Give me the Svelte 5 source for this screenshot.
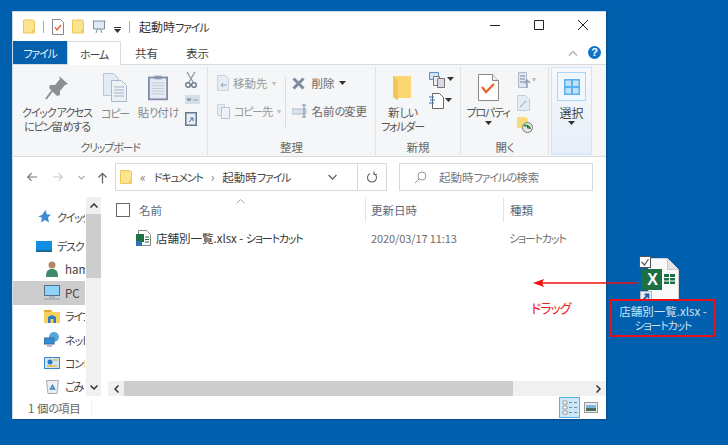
<script>
  const sidebar = [
    { label: "クイック", icon: "star", top: true },
    { label: "デスク", icon: "desk", outer: true },
    { label: "ham", icon: "user", latin: true },
    { label: "PC", icon: "pc", active: true, latin: true },
    { label: "ライフ", icon: "lib" },
    { label: "ネット", icon: "net" },
    { label: "コント", icon: "ctl" },
    { label: "ごみ", icon: "bin" }
  ];
</script>

{#snippet folder(w, h)}
  <svg width={w} height={h} viewBox="0 0 12 14"><path d="M.5.5h9l2 1v12H.5z" fill="#fde58f" stroke="#eec45d"/><path d="M9 10h2.500v3.500H9z" fill="#f3cf6c"/></svg>
{/snippet}

{#snippet caret()}
  <svg class="caret" width="7" height="4" viewBox="0 0 7 4"><path d="M0 0h7L3.500 4z" fill="#333"/></svg>
{/snippet}

<div class="desktop">
  <div class="window">
    <div class="titlebar">
      {@render folder(12, 15)}
      <i class="vline"></i>
      <svg width="12" height="16" viewBox="0 0 12 16"><path d="M.5.5h8l3 3v12H.5z" fill="#fff" stroke="#888"/><path d="M3 8l2 3 4-5" fill="none" stroke="#e8562a" stroke-width="1.300"/></svg>
      {@render folder(12, 15)}
      <svg width="14" height="14" viewBox="0 0 14 14"><path d="M.5 1h13M1.500 1v8h11V1" fill="#dfeaf5" stroke="#7e8ea0"/><path d="M4 13l1.500-4M10 13L8.500 9" stroke="#7e8ea0"/></svg>
      <span class="qat-more"><b></b>{@render caret()}</span>
      <i class="vline"></i>
      <span class="title">起動時<span class="k">ファイル</span></span>
      <span class="winbtns">
        <svg width="12" height="12" viewBox="0 0 12 12"><path d="M1 6.500h10" stroke="#222"/></svg>
        <svg width="12" height="12" viewBox="0 0 12 12"><path d="M1.500 1.500h9v9h-9z" fill="none" stroke="#222"/></svg>
        <svg width="12" height="12" viewBox="0 0 12 12"><path d="M1 1l10 10M11 1L1 11" stroke="#222"/></svg>
      </span>
    </div>

    <div class="tabs">
      <span class="tab file k">ファイル</span>
      <span class="tab home k">ホーム</span>
      <span class="tab">共有</span>
      <span class="tab">表示</span>
      <span class="tab-right">
        <svg width="10" height="6" viewBox="0 0 10 6"><path d="M1 5.500l4-4 4 4" fill="none" stroke="#aaa" stroke-width="1.200"/></svg>
        <span class="help">?</span>
      </span>
    </div>

    <div class="ribbon">
      <section class="group clip">
        <div class="body">
          <div class="big pin">
            <svg width="24" height="26" viewBox="0 0 24 26"><path d="M14 1l9 8-3 1-5 6 0 4-3 1-8-8 1-3 5 0 5-6z" fill="#8b8f92"/><path d="M7 16l-6 8" stroke="#8b8f92" stroke-width="2"/></svg>
            <span><span class="k">クイック アクセス</span><br/><span class="k">にピン</span>留<span class="k">めする</span></span>
          </div>
          <div class="big copy">
            <svg width="25" height="29" viewBox="0 0 25 29"><path d="M.5.500h10l5 5v17H.5z" fill="#e3ebf4" stroke="#b9c6d6"/><path d="M8.500 7.500h10l5 5v16h-15z" fill="#eef2f7" stroke="#aab9cb"/><path d="M11 14h10M11 17h10M11 20h10M11 23h10" stroke="#a5b3c3"/></svg>
            <span class="k">コピー</span>
          </div>
          <div class="big paste">
            <svg width="20" height="27" viewBox="0 0 22 28"><rect x="1" y="3" width="20" height="24" fill="#e7eaf3" stroke="#7f8daa" stroke-width="2"/><path d="M7 1h8v4H7z" fill="#8b97ad"/><path d="M4 9h14M4 12h14M4 15h14M4 18h14M4 21h14" stroke="#bcc6d6"/></svg>
            <span>貼<span class="k">り</span>付<span class="k">け</span></span>
          </div>
          <div class="smalls">
            <svg width="12" height="16" viewBox="0 0 12 16"><path d="M2 0l6 10M10 0L4 10" stroke="#8e99a6" stroke-width="1.300"/><circle cx="3" cy="13" r="2.300" fill="none" stroke="#5f6f84" stroke-width="1.300"/><circle cx="9" cy="13" r="2.300" fill="none" stroke="#5f6f84" stroke-width="1.300"/></svg>
            <svg width="15" height="9" viewBox="0 0 15 9"><rect width="15" height="9" fill="#d5dfea"/><path d="M2 3l1 3 1-3 1 3 1-3M8 5h5" fill="none" stroke="#7b8a9c" stroke-width=".8"/></svg>
            <svg width="12" height="15" viewBox="0 0 12 15"><rect x=".75" y="1.750" width="10.500" height="12.500" fill="#e6ecf3" stroke="#66788f" stroke-width="1.500"/><path d="M4 11l4-4M5 7h3v3" fill="none" stroke="#3e6ea8"/></svg>
          </div>
        </div>
        <label class="k">クリップボード</label>
      </section>

      <section class="group org">
        <div class="body">
          <div class="col">
            <div class="row dim">
              <svg width="12" height="16" viewBox="0 0 12 16"><path d="M.5.500h8l3 3v12H.5z" fill="#e6ecf3" stroke="#c9d3de"/><path d="M10 10H4M6 8l-2 2 2 2" fill="none" stroke="#8ea2ba"/></svg>
              <span>移動先</span><em>▾</em>
            </div>
            <div class="row dim">
              <svg width="13" height="15" viewBox="0 0 13 15"><path d="M.5.500h7v11h-7z" fill="#e6ecf3" stroke="#c9d3de"/><path d="M4.500 3.500h8v11h-8z" fill="#eef2f7" stroke="#b6c3d2"/></svg>
              <span><span class="k">コピー</span>先</span><em>▾</em>
            </div>
          </div>
          <i class="sep"></i>
          <div class="col second">
            <div class="row">
              <svg class="del" width="13" height="13" viewBox="0 0 13 13"><path d="M1.500 1.500l10 10M11.500 1.500l-10 10" stroke="#7c8b9d" stroke-width="3"/></svg>
              <span>削除</span>{@render caret()}
            </div>
            <div class="row">
              <svg width="16" height="14" viewBox="0 0 16 14"><path d="M0 5h14v5H0z" fill="#d9e2ec" stroke="#aebccb"/><path d="M12 1v12M10 1h4M10 13h4" stroke="#7c8b9d"/></svg>
              <span>名前<span class="k">の</span>変更</span>
            </div>
          </div>
        </div>
        <label>整理</label>
      </section>

      <section class="group new">
        <div class="body">
          <div class="big newf">
            <svg width="19" height="27" viewBox="0 0 19 27"><path d="M0 1h18v22H5l-1 2-4-3z" fill="#fcd670"/><path d="M0 1l5 4v20l-5-3z" fill="#f3c553"/></svg>
            <span>新<span class="k">しい</span><br/><span class="k">フォルダー</span></span>
          </div>
          <div class="smalls">
            <span class="wcaret">
              <svg width="17" height="16" viewBox="0 0 17 16"><path d="M.5.500h9v7h-9z" fill="#cfe3f5" stroke="#5f8fc0"/><path d="M4.500 4.500h6v9h-6z" fill="#eee" stroke="#777"/><path d="M8.500 6.500h7v9h-7z" fill="#d8d8e8" stroke="#777"/></svg>
              {@render caret()}
            </span>
            <span class="wcaret">
              <svg width="15" height="16" viewBox="0 0 15 16"><path d="M3.500.500h7l4 4v11h-11z" fill="#fff" stroke="#666"/><path d="M0 4h5M1 7h5M0 10h5" stroke="#2b79c9"/></svg>
              {@render caret()}
            </span>
          </div>
        </div>
        <label>新規</label>
      </section>

      <section class="group open">
        <div class="body">
          <div class="big prop">
            <svg width="21" height="27" viewBox="0 0 21 27"><path d="M.5.500h14l6 6v20H.5z" fill="#fff" stroke="#888"/><path d="M14.500.500v6h6" fill="#eee" stroke="#888"/><path d="M4 13l4 5 8-8" fill="none" stroke="#e8622c" stroke-width="2.200"/></svg>
            <span class="k">プロパティ</span>
            {@render caret()}
          </div>
          <div class="smalls">
            <span class="wcaret">
              <svg width="13" height="17" viewBox="0 0 13 17"><path d="M.5.500h8v15h-8z" fill="#dfe6ef" stroke="#aebbca"/><path d="M2 4h5M2 7h5M2 10h5" stroke="#7c8b9d"/><path d="M9 16V8M6.500 11L9 8l3 3" fill="none" stroke="#8ea2ba" stroke-width="1.500"/></svg>
              <em>▾</em>
            </span>
            <svg class="shift" width="13" height="16" viewBox="0 0 13 16"><path d="M.5.500h8l4 4v11H.5z" fill="#e6ecf3" stroke="#c1cedc"/><path d="M3 12l6-6" stroke="#b0bfd0" stroke-width="1.500"/></svg>
            <svg class="shift" width="16" height="16" viewBox="0 0 16 16"><path d="M0 0h9l2 2v9H0z" fill="#f7dc7c"/><circle cx="10.500" cy="10.500" r="5" fill="#e5e5e5" stroke="#777"/><path d="M7 9a4 4 0 0 1 6 3" fill="none" stroke="#2b9a3f" stroke-width="2"/><path d="M10.500 8v3h2" fill="none" stroke="#555"/></svg>
          </div>
        </div>
        <label>開<span class="k">く</span></label>
      </section>

      <section class="group pick">
        <div class="hl">
          <div class="hl-icon">
            <svg width="16" height="16" viewBox="0 0 16 16"><rect width="16" height="16" fill="#5cb1ef"/><path d="M1.500 1.500h5.500v5.500H1.500zM9 1.500h5.500v5.500H9zM1.500 9h5.500v5.500H1.500zM9 9h5.500v5.500H9z" fill="#bfe2fa"/></svg>
          </div>
          <span>選択</span>
          {@render caret()}
        </div>
      </section>
    </div>

    <div class="nav">
      <svg width="12" height="12" viewBox="0 0 14 12"><path d="M13 6H2M6.500 1.500L2 6l4.500 4.500" fill="none" stroke="#777" stroke-width="1.400"/></svg>
      <svg class="fwd" width="12" height="12" viewBox="0 0 14 12"><path d="M1 6h11M7.500 1.500L12 6l-4.500 4.500" fill="none" stroke="#ccc" stroke-width="1.400"/></svg>
      <svg width="7" height="5" viewBox="0 0 7 5"><path d="M.5 1l3 3 3-3" fill="none" stroke="#aaa" stroke-width="1.200"/></svg>
      <svg class="up" width="11" height="13" viewBox="0 0 12 13"><path d="M6 13V2M1.500 6.500L6 2l4.500 4.500" fill="none" stroke="#666" stroke-width="1.400"/></svg>
      <div class="address">
        {@render folder(12, 16)}
        <span class="crumb lt">«</span>
        <span class="crumb k">ドキュメント</span>
        <span class="crumb lt">›</span>
        <span class="crumb">起動時<span class="k">ファイル</span></span>
        <svg class="addr-down" width="9" height="6" viewBox="0 0 9 6"><path d="M.5 1l4 4 4-4" fill="none" stroke="#666" stroke-width="1.300"/></svg>
        <span class="refresh">
          <svg width="11" height="12" viewBox="0 0 11 12"><path d="M3 2.500a4.500 4.500 0 1 0 4 0M7 .5v3h3" fill="none" stroke="#666" stroke-width="1.100"/></svg>
        </span>
      </div>
      <div class="search">
        <svg width="13" height="13" viewBox="0 0 13 13"><circle cx="8" cy="5" r="4" fill="none" stroke="#999"/><path d="M5 8l-4 4" stroke="#999"/></svg>
        <span>起動時<span class="k">ファイルの</span>検索</span>
      </div>
    </div>

    <div class="content">
      <aside class="side">
        <ul>
          {#each sidebar as item}
            <li class:active={item.active} class:top={item.top} class:outer={item.top || item.outer}>
              <span class="ico">
                {#if item.icon === "star"}
                  <svg width="13" height="13" viewBox="0 0 13 13"><path d="M7.500 0l1.500 4.500h4L10 7.500l1 5-4-2.500-4 2.500 1-5-4-1 4-1.500z" fill="#3d8bd1"/></svg>
                {:else if item.icon === "desk"}
                  <svg width="16" height="11" viewBox="0 0 16 11"><rect width="16" height="11" fill="#0f8ee3"/><path d="M0 10h16" stroke="#245"/></svg>
                {:else if item.icon === "user"}
                  <svg width="12" height="16" viewBox="0 0 12 16"><circle cx="6" cy="4" r="3.500" fill="#b28a68"/><path d="M0 16c0-6 2-8 6-8s6 2 6 8z" fill="#3e8a68"/></svg>
                {:else if item.icon === "pc"}
                  <svg width="16" height="15" viewBox="0 0 16 15"><rect x=".5" y=".5" width="15" height="10" fill="#8fd3f8" stroke="#5a6f85"/><path d="M5 12h6M0 14h16" stroke="#8899aa"/></svg>
                {:else if item.icon === "lib"}
                  <svg width="16" height="13" viewBox="0 0 16 13"><path d="M0 0h7l2 2h7v11H0z" fill="#f7cf5d"/><path d="M0 0h7v2H0z" fill="#e1a72f"/><path d="M4 13V7l4-2 4 2v6H9.500V9h-3v4z" fill="#2b79c9"/></svg>
                {:else if item.icon === "net"}
                  <svg width="16" height="15" viewBox="0 0 16 15"><circle cx="10" cy="5" r="5" fill="#58a6dd"/><rect y="6" width="10" height="6" fill="#2f8fd8" stroke="#3c6a92"/><path d="M3 14h5" stroke="#778"/></svg>
                {:else if item.icon === "ctl"}
                  <svg width="16" height="12" viewBox="0 0 16 12"><rect x=".5" y=".5" width="15" height="11" fill="#cfe6f7" stroke="#3e86c6"/><circle cx="6" cy="5" r="2.500" fill="#2b79c9"/><path d="M9 3h5M3 9h10" stroke="#e5b63f" stroke-width="1.500"/></svg>
                {:else}
                  <svg width="13" height="15" viewBox="0 0 13 15"><path d="M.5 1.500h12l-1.500 13H2z" fill="#eceff2" stroke="#a5acb3"/><path d="M4.500 10l2-3.500 2 3.500z" fill="none" stroke="#3585c5" stroke-width="1.500"/></svg>
                {/if}
              </span>
              <span class:k={!item.latin}>{item.label}</span>
            </li>
          {/each}
        </ul>
        <div class="vscroll">
          <span class="sbtn"><svg width="8" height="5" viewBox="0 0 8 5"><path d="M.5 4.500L4 1l3.500 3.500" fill="none" stroke="#333" stroke-width="1.500"/></svg></span>
          <span class="thumb"></span>
          <span class="spacer"></span>
          <span class="sbtn"><svg width="8" height="5" viewBox="0 0 8 5"><path d="M.5.500L4 4 7.500.5" fill="none" stroke="#333" stroke-width="1.500"/></svg></span>
        </div>
      </aside>

      <div class="list">
        <span class="sort"><svg width="9" height="5" viewBox="0 0 9 5"><path d="M.5 4.500l4-4 4 4" fill="none" stroke="#aaa"/></svg></span>
        <div class="head">
          <span class="check"></span>
          <span class="h-name">名前</span>
          <span class="h-date">更新日時</span>
          <span class="h-type">種類</span>
        </div>
        <div class="file-row">
          <svg width="15" height="16" viewBox="0 0 15 16"><path d="M2.500.500h8l4 4v11h-12z" fill="#fff" stroke="#888"/><path d="M0 4h8v8H0z" fill="#1d7044"/><path d="M9 7h4M9 9.500h4M9 12h4" stroke="#1d7044"/><path d="M0 11h6v5H0z" fill="#2e6fb5"/></svg>
          <span class="fname">店舗別一覧.xlsx - <span class="k">ショートカット</span></span>
          <span class="fdate">2020/03/17 11:13</span>
          <span class="ftype k">ショートカット</span>
        </div>
        <div class="grow"></div>
        <div class="hscroll">
          <span class="hbtn"><svg width="5" height="8" viewBox="0 0 5 8"><path d="M4.500.5L1 4l3.500 3.500" fill="none" stroke="#333" stroke-width="1.500"/></svg></span>
          <span class="hthumb"></span>
          <span class="spacer"></span>
          <span class="hbtn"><svg width="5" height="8" viewBox="0 0 5 8"><path d="M.5.5L4 4 .5 7.500" fill="none" stroke="#333" stroke-width="1.500"/></svg></span>
        </div>
      </div>
    </div>

    <div class="status">
      <span class="count">1 個<span class="k">の</span>項目</span>
      <span class="views">
        <span class="view on">
          <svg width="16" height="15" viewBox="0 0 16 15"><path d="M1 1h4v3H1zM1 6h4v3H1zM1 11h4v3H1z" fill="#fff" stroke="#8a8a8a" stroke-width=".8"/><path d="M7 2.500h3M12 2.500h3M7 7.500h3M12 7.500h3M7 12.500h3M12 12.500h3" stroke="#7a8a9a" stroke-width="1.200"/></svg>
        </span>
        <span class="view thumbs">
          <svg width="14" height="11" viewBox="0 0 14 11"><rect x=".5" y=".5" width="13" height="10" fill="#e8edf2" stroke="#999"/><path d="M2 3h10v3H2z" fill="#7fb5d8"/><path d="M2 6h10v3H2z" fill="#4b6e55"/></svg>
        </span>
      </span>
    </div>
  </div>

  <svg class="arrow" width="104" height="12" viewBox="0 0 104 12"><path d="M104 6H6" stroke="#f01010" stroke-width="1.600"/><path d="M0 6l11-4-2 4 2 4z" fill="#f01010"/></svg>
  <span class="drag">ドラッグ</span>

  <div class="shortcut">
    <svg width="42" height="48" viewBox="0 0 42 48">
      <path d="M9.500 2.500h19l11 11v33h-30z" fill="#fafafa" stroke="#d4d4d4"/>
      <path d="M28.500 2.500v11h11" fill="#e4e4e4" stroke="#c8c8c8"/>
      <rect x=".5" y=".5" width="11" height="11" fill="#fff" stroke="#555"/>
      <path d="M2.500 6l3 3 4-6" fill="none" stroke="#555" stroke-width="1.200"/>
      <rect x="2" y="13" width="21" height="21" fill="#1d7044"/>
      <rect x="25" y="18" width="11" height="10" fill="#1d7044"/>
      <path d="M25 21.500h11M25 25h11M30.500 18v10" stroke="#fff" stroke-width="1"/>
      <rect x="1.500" y="35.500" width="11" height="11" fill="#eef2f7" stroke="#b5b5b5"/>
      <path d="M4 44l5-5M5.500 38.500H9.500v4" fill="none" stroke="#1f5da8" stroke-width="1.800"/>
    </svg>
    <span class="x">X</span>
    <div class="shortcut-label">店舗別一覧.xlsx -<br/><span class="k">ショートカット</span></div>
  </div>
</div>

<style>
  :global(body) {
    margin: 0;
  }

  .desktop {
    position: relative;
    width: 728px;
    height: 445px;
    overflow: hidden;
    background: #0060ae;
    font-family: "Noto Sans CJK JP", "Noto Sans", sans-serif;
    font-size: 11.5px;
    font-feature-settings: "palt";
    color: #444;
    line-height: 14px;
  }

  /* kana run narrower than kanji in the original UI font */
  .k {
    font-size: 11px;
    letter-spacing: -1.2px;
  }

  .window {
    position: absolute;
    left: 12px;
    top: 11px;
    width: 593px;
    height: 407px;
    display: flex;
    flex-direction: column;
    background: #fff;
    border: 1px solid #cfdbe6;
    border-width: 1px 0 0 1px;
    box-shadow: 1px 1px 2px #004b88;
  }

  .titlebar {
    height: 29px;
    flex: none;
    display: flex;
    align-items: center;
    padding-left: 10px;
    gap: 8px;
  }
  .vline {
    width: 1px;
    height: 12px;
    background: #aaa;
  }
  .qat-more {
    display: flex;
    flex-direction: column;
    align-items: center;
    gap: 1px;
    margin-top: 6px;
  }
  .qat-more b {
    width: 7px;
    height: 1px;
    background: #333;
  }
  .title {
    color: #333;
    font-size: 12px;
    margin-left: 1px;
  }
  .winbtns {
    margin-left: auto;
    display: flex;
    gap: 32px;
    padding-right: 17px;
    margin-top: -3px;
  }

  .tabs {
    height: 23px;
    flex: none;
    display: flex;
    align-items: stretch;
    position: relative;
  }
  .tab {
    display: flex;
    align-items: center;
    justify-content: center;
    width: 51px;
    color: #444;
  }
  .file {
    width: 54px;
    background: #0561ae;
    color: #e8f1f9;
  }
  .home {
    width: 52px;
    border: 1px solid #dadbdc;
    border-bottom: 0;
    margin-bottom: -1px;
    background: #fff;
    z-index: 1;
  }
  .tab-right {
    margin-left: auto;
    display: flex;
    align-items: center;
    gap: 10px;
    padding-right: 5px;
  }
  .help {
    width: 13px;
    height: 13px;
    border-radius: 50%;
    background: #1173c7;
    color: #fff;
    font: bold 11px/13px "Liberation Sans", sans-serif;
    text-align: center;
  }

  .ribbon {
    height: 93px;
    flex: none;
    display: flex;
    background: #f5f6f7;
    border-top: 1px solid #dadbdc;
    border-bottom: 1px solid #dadbdc;
    box-sizing: border-box;
  }
  .group {
    display: flex;
    flex-direction: column;
    border-right: 1px solid #e2e3e4;
    margin: 2px 0 1px;
    box-sizing: border-box;
    color: #666;
  }
  .group label {
    text-align: center;
    height: 15px;
    line-height: 15px;
    color: #666;
  }
  .body {
    flex: 1;
    display: flex;
    min-height: 0;
  }
  .clip { width: 195px; }
  .org { width: 168px; }
  .new { width: 85px; }
  .open { width: 88px; }
  .pick { flex: 1; border: 0; }

  .big {
    display: flex;
    flex-direction: column;
    align-items: center;
    text-align: center;
    line-height: 14px;
  }
  .big svg {
    flex: none;
  }
  .big span {
    margin-top: 8px;
    white-space: nowrap;
  }
  .pin {
    width: 84px;
    margin-left: 2px;
    padding-top: 8px;
  }
  .pin span {
    margin-top: 4px;
    color: #555;
  }
  .copy {
    width: 34px;
    padding-top: 6px;
    color: #888;
    margin-left: -1px;
  }
  .copy span, .paste span {
    margin-top: 4px;
  }
  .paste {
    width: 48px;
    margin-left: 2px;
    padding-top: 7px;
    color: #888;
  }
  .smalls {
    display: flex;
    flex-direction: column;
    gap: 7px;
    padding: 5px 0 0 3px;
    align-items: flex-start;
  }
  .col {
    display: flex;
    flex-direction: column;
    padding: 8px 0 0 9px;
    gap: 12px;
    width: 68px;
  }
  .second {
    padding-left: 6px;
    width: 84px;
  }
  .row {
    display: flex;
    align-items: center;
    gap: 4px;
    height: 16px;
    white-space: nowrap;
    color: #666;
  }
  .dim {
    color: #999;
  }
  .row em, .wcaret em {
    font-style: normal;
    font-size: 8px;
    color: #bbb;
  }
  .del {
    margin-right: 3px;
  }
  .sep {
    width: 1px;
    height: 52px;
    margin-top: 10px;
    background: #dcdddf;
  }
  .newf {
    width: 49px;
    margin-left: 2px;
    padding-top: 8px;
    color: #555;
  }
  .newf span {
    margin-top: 3px;
  }
  .new .smalls {
    padding: 5px 0 0 2px;
    gap: 5px;
  }
  .wcaret {
    display: flex;
    align-items: flex-start;
    gap: 1px;
  }
  .wcaret .caret {
    margin-top: 5px;
  }
  .prop {
    width: 50px;
    margin-left: 2px;
    padding-top: 7px;
    color: #555;
  }
  .prop span {
    margin-top: 4px;
  }
  .prop .caret {
    margin-top: 2px;
  }
  .open .smalls {
    padding: 5px 0 0 5px;
    gap: 6px;
  }
  .shift {
    margin-left: -1px;
  }
  .hl {
    width: 41px;
    margin-left: 2px;
    height: 88px;
    box-sizing: border-box;
    background: linear-gradient(#f6f9fc, #e6eef7);
    border: 1px solid #cfe5f7;
    display: flex;
    flex-direction: column;
    align-items: center;
    padding-top: 4px;
    color: #444;
  }
  .hl-icon {
    width: 29px;
    height: 29px;
    box-sizing: border-box;
    border: 1px solid #a9d7f7;
    background: #f0f8fe;
    display: flex;
    align-items: center;
    justify-content: center;
  }
  .hl span {
    margin-top: 5px;
    font-size: 12px;
  }
  .hl .caret {
    margin-top: 1px;
  }

  .nav {
    height: 40px;
    flex: none;
    display: flex;
    align-items: center;
    padding-left: 13px;
    box-sizing: border-box;
    gap: 14px;
    color: #444;
  }
  .up {
    margin-left: -2px;
  }
  .address {
    margin-left: -7px;
    width: 272px;
    height: 28px;
    box-sizing: border-box;
    border: 1px solid #d9d9d9;
    display: flex;
    align-items: center;
    padding-left: 4px;
    gap: 8px;
  }
  .crumb {
    white-space: nowrap;
  }
  .crumb.lt {
    color: #777;
    font-size: 12px;
  }
  .addr-down {
    margin-left: auto;
    margin-right: 12px;
  }
  .refresh {
    width: 28px;
    height: 100%;
    border-left: 1px solid #d9d9d9;
    display: flex;
    align-items: center;
    justify-content: center;
  }
  .search {
    width: 194px;
    height: 28px;
    box-sizing: border-box;
    border: 1px solid #d9d9d9;
    display: flex;
    align-items: center;
    padding-left: 14px;
    gap: 12px;
    color: #777;
    margin-left: -2px;
  }

  .content {
    flex: 1;
    display: flex;
    min-height: 0;
  }
  .side {
    width: 90px;
    flex: none;
    display: flex;
  }
  .side ul {
    list-style: none;
    margin: 0;
    padding: 0;
    width: 72px;
    overflow: hidden;
  }
  .side li {
    height: 23.400px;
    display: flex;
    align-items: center;
    white-space: nowrap;
    color: #444;
    padding-left: 31px;
  }
  .side li.outer {
    padding-left: 23px;
  }
  .side li.top {
    margin-top: 8px;
    margin-bottom: 6px;
  }
  .side li.active {
    background: #cdcdcd;
  }
  .ico {
    width: 16px;
    flex: none;
    display: flex;
    justify-content: center;
    margin-right: 5px;
  }
  .vscroll {
    width: 15px;
    display: flex;
    flex-direction: column;
    background: #f0f0f0;
    margin-left: 1px;
  }
  .sbtn {
    height: 17px;
    display: flex;
    align-items: center;
    justify-content: center;
    flex: none;
  }
  .thumb {
    height: 64px;
    background: #cdcdcd;
  }
  .spacer {
    flex: 1;
  }

  .list {
    flex: 1;
    display: flex;
    flex-direction: column;
    position: relative;
    margin-left: 2px;
    min-width: 0;
  }
  .sort {
    position: absolute;
    left: 131px;
    top: 0;
    line-height: 5px;
  }
  .head {
    height: 26px;
    display: flex;
    align-items: center;
    color: #5a6a7a;
  }
  .check {
    width: 12px;
    height: 12px;
    border: 1px solid #666;
    margin-left: 11px;
    flex: none;
  }
  .h-name {
    margin-left: 9px;
    width: 226px;
    flex: none;
  }
  .h-date {
    border-left: 1px solid #e5e5e5;
    padding-left: 5px;
    width: 132px;
    line-height: 24px;
    flex: none;
  }
  .h-type {
    border-left: 1px solid #e5e5e5;
    padding-left: 6px;
    line-height: 24px;
  }
  .file-row {
    height: 30px;
    display: flex;
    align-items: center;
    padding-left: 31px;
    white-space: nowrap;
  }
  .fname {
    margin-left: 5px;
    width: 215px;
    flex: none;
    color: #333;
  }
  .fdate {
    width: 138px;
    flex: none;
    color: #6d6d6d;
    font-size: 11px;
    letter-spacing: -0.1px;
  }
  .ftype {
    color: #6d6d6d;
  }
  .grow {
    flex: 1;
  }
  .hscroll {
    height: 15px;
    display: flex;
    align-items: center;
    background: #f0f0f0;
    margin-left: 3px;
    flex: none;
  }
  .hbtn {
    width: 16px;
    flex: none;
    display: flex;
    justify-content: center;
  }
  .hthumb {
    width: 389px;
    height: 100%;
    background: #cdcdcd;
  }

  .status {
    height: 23px;
    flex: none;
    display: flex;
    align-items: center;
    padding-left: 15px;
    color: #666;
  }
  .count {
    padding-right: 10px;
    border-right: 1px solid #f0f0f0;
    line-height: 12px;
  }
  .views {
    margin-left: auto;
    display: flex;
    align-items: center;
    padding-right: 8px;
    gap: 3px;
  }
  .view {
    width: 21px;
    height: 21px;
    display: flex;
    align-items: center;
    justify-content: center;
    box-sizing: border-box;
  }
  .view.thumbs {
    width: 15px;
  }
  .view.on {
    background: #cce8f8;
    border: 1px solid #5ab0e5;
  }

  .arrow {
    position: absolute;
    left: 533px;
    top: 277px;
  }
  .drag {
    position: absolute;
    left: 531px;
    top: 300px;
    color: #f02020;
    font-size: 13px;
    letter-spacing: -1px;
    line-height: 16px;
  }
  .shortcut {
    position: absolute;
    left: 610px;
    top: 256px;
    width: 106px;
    display: flex;
    flex-direction: column;
    align-items: center;
  }
  .shortcut svg {
    margin-left: -6px;
    margin-bottom: -5px;
  }
  .x {
    position: absolute;
    left: 32px;
    top: 13px;
    width: 21px;
    text-align: center;
    color: #fff;
    font: bold 16px/21px "Liberation Sans", sans-serif;
  }
  .shortcut-label {
    z-index: 1;
    box-sizing: border-box;
    width: 106px;
    height: 38px;
    border: 2px solid #e8101a;
    text-align: center;
    color: #cfe2f2;
    line-height: 14px;
    padding-top: 3px;
    background: #0060ae;
  }
</style>
